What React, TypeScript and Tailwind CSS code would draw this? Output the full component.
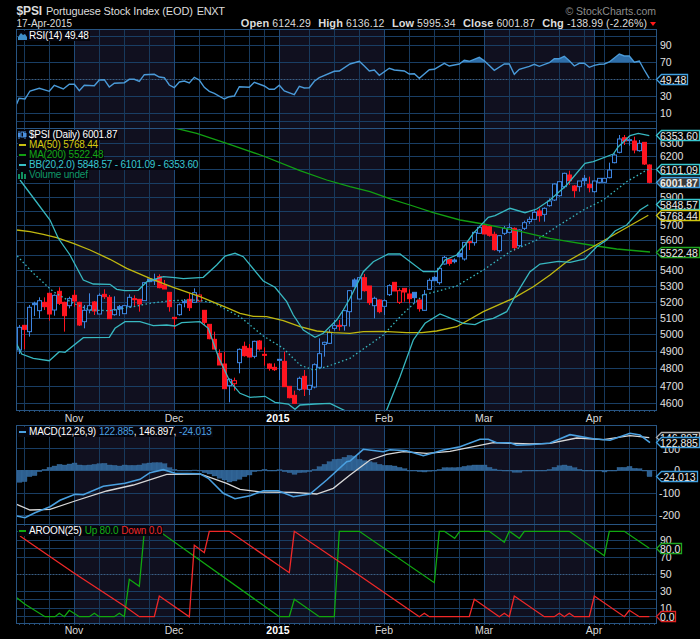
import React from 'react';

type Pt = [number, number];

// traced chart data: every series is in crop pixels (3x), offX/offY bring it back to page pixels
const toPage = (pts: Pt[], offX = 0, offY = 0) =>
  pts.map(([x, y]) => `${(offX + x / 3).toFixed(1)},${(offY + y / 3).toFixed(1)}`).join(' ');

const PLOT_L = 16.5;
const PLOT_R = 656.5;

const vLines = [24, 49, 99, 124, 149, 199, 224, 249, 264, 309, 334, 359, 409, 434, 459, 509, 534, 559, 584, 604, 629];
const monthLines = [74, 174, 279, 384, 484, 594];
const navyBands: [number, number][] = [[74, 174], [279, 384], [484, 594]];

const rsi: Pt[] = [[50,312],[57,295],[75,297],[90,273],[118,265],[148,274],[163,256],[190,267],[208,253],[223,253],[238,272],[253,256],[283,257],[298,240],[313,239],[328,261],[343,250],[373,248],[388,238],[403,238],[418,244],[433,224],[463,223],[478,231],[493,233],[508,255],[523,263],[538,246],[553,243],[568,249],[583,232],[598,240],[613,262],[628,274],[643,280],[673,297],[688,290],[703,288],[718,260],[748,262],[763,247],[793,258],[808,268],[823,268],[838,256],[853,273],[883,284],[898,259],[913,264],[928,263],[943,244],[958,233],[1003,214],[1018,213],[1050,192],
  [1078,184],[1093,198],[1108,213],[1123,210],[1138,226],[1168,205],[1183,210],[1213,213],[1228,222],[1243,221],[1258,235],[1288,209],[1303,208],[1333,190],[1348,198],[1378,192],[1393,181],[1408,184],[1438,172],[1453,182],[1483,211],[1513,192],[1528,192],[1543,223],[1558,208],[1588,199],[1603,193],[1618,199],[1648,188],[1663,176],[1678,176],[1693,169],[1708,182],[1723,198],[1738,190],[1753,190],[1768,202],[1783,196],[1798,193],[1813,192],[1828,186],[1858,162],[1873,168],[1888,168],[1903,187],[1918,183],[1933,210],[1948,235]];

const ma200: Pt[] = [[528,385],[590,400],[680,430],[790,468],[900,512],[980,540],[1050,560],[1110,575],[1175,598],[1230,615],[1300,638],[1380,660],[1450,672],[1550,692],[1650,715],[1690,722],[1770,735],[1850,747],[1950,756]];
const ma50: Pt[] = [[50,690],[90,695],[130,703],[170,713],[220,730],[270,750],[330,778],[380,805],[450,835],[520,862],[600,890],[680,923],[720,940],[760,949],[800,950],[850,962],[900,980],[950,993],[1000,998],[1050,1000],[1090,995],[1150,994],[1220,998],[1265,998],[1310,993],[1370,980],[1450,935],[1540,895],[1600,860],[1650,825],[1700,785],[1750,757],[1850,700],[1945,646]];
const bbUp: Pt[] = [[60,540],[105,600],[150,660],[175,715],[210,765],[250,840],[280,852],[330,853],[350,868],[375,872],[415,871],[440,845],[490,830],[525,833],[550,836],[610,832],[650,795],[675,768],[705,760],[730,770],[790,843],[825,862],[860,905],[880,945],[910,990],[945,1012],[970,1000],[1010,960],[1030,930],[1050,895],[1090,815],[1120,785],[1165,762],[1200,762],[1270,815],[1310,815],[1335,780],[1370,765],[1395,735],[1420,700],[1465,652],[1485,647],[1530,625],[1575,638],[1610,627],[1650,600],[1700,555],[1755,490],[1780,485],[1840,462],[1855,440],[1890,407],[1915,400],[1948,407]];
const bbLow: Pt[] = [[50,1032],[65,1062],[100,1075],[148,1082],[178,1055],[195,1057],[250,1013],[328,1012],[345,985],[375,965],[420,965],[460,977],[500,975],[525,978],[545,968],[600,965],[625,985],[655,1070],[690,1145],[720,1180],[750,1192],[795,1189],[825,1207],[865,1212],[885,1228],[900,1215],[945,1212],[990,1210],[1035,1232],[1060,1250],[1140,1250],[1160,1230],[1200,1130],[1240,1020],[1275,970],[1320,942],[1390,970],[1425,974],[1450,962],[1480,955],[1520,935],[1550,880],[1590,815],[1620,792],[1675,784],[1710,787],[1755,777],[1790,740],[1820,720],[1845,693],[1880,675],[1920,630],[1945,614]];
const bbMid: Pt[] = [[52,768],[100,820],[160,875],[220,910],[270,930],[330,932],[400,920],[450,910],[510,902],[590,900],[640,908],[680,930],[720,950],[790,1008],[850,1045],[900,1095],[940,1110],[980,1100],[1050,1075],[1150,1005],[1210,940],[1270,885],[1370,858],[1450,810],[1530,755],[1610,720],[1670,680],[1750,630],[1810,600],[1880,545],[1940,510],[1955,507]];

const macdLine: Pt[] = [[50,288],[75,293],[105,278],[150,260],[180,241],[225,223],[250,224],[310,199],[375,190],[420,178],[450,158],[490,149],[525,160],[600,161],[625,175],[670,220],[705,236],[750,227],[790,212],[835,212],[880,230],[930,222],[980,180],[1040,125],[1050,123],[1090,88],[1150,95],[1170,89],[1220,92],[1270,107],[1330,90],[1380,80],[1440,58],[1465,58],[1490,68],[1530,68],[1550,76],[1590,74],[1650,69],[1710,44],[1780,56],[1830,61],[1890,40],[1920,45],[1950,68]];
const signal: Pt[] = [[50,253],[90,270],[150,268],[225,243],[320,213],[400,195],[500,163],[600,162],[680,190],[720,208],[780,216],[880,217],[950,222],[1000,205],[1050,165],[1110,120],[1160,103],[1210,95],[1280,100],[1350,94],[1480,68],[1590,72],[1650,70],[1730,54],[1810,59],[1890,47],[1948,53]];
const histTops = [187,185,170,167,155,148,142,138,133,135,132,129,135,136,135,133,131,130,135,136,138,135,136,136,135,131,129,128,128,131,143,148,151,152,152,150,152,158,162,168,175,180,186,183,178,170,165,155,152,148,151,151,149,155,158,163,158,157,155,148,140,133,125,118,117,112,106,108,118,122,125,128,133,136,136,138,142,146,152,153,155,156,154,152,148,143,143,143,142,139,137,135,135,135,142,147,150,151,152,157,157,153,152,152,152,152,148,142,137,135,138,143,148,151,152,152,152,156,152,151,142,142,139,145,146,152,170];

const aroonUp: Pt[] = [[50,533],[75,553],[135,590],[165,590],[178,580],[193,590],[208,571],[238,590],[268,590],[283,580],[298,590],[343,590],[358,580],[373,590],[388,478],[418,499],[433,334],[478,334],[838,590],[868,590],[883,538],[958,590],[1003,590],[1018,334],[1078,334],[1303,488],[1318,334],[1333,334],[1364,355],[1379,334],[1468,334],[1513,367],[1528,334],[1558,355],[1573,334],[1708,334],[1813,407],[1828,334],[1873,334],[1948,385]];
const aroonDown: Pt[] = [[60,348],[223,460],[373,558],[418,590],[463,590],[478,528],[568,590],[583,376],[613,398],[628,334],[688,334],[868,458],[883,334],[1050,447],[1258,590],[1273,580],[1288,590],[1408,590],[1423,538],[1498,590],[1513,580],[1528,590],[1543,528],[1633,590],[1663,590],[1678,580],[1693,590],[1708,580],[1723,590],[1768,590],[1783,528],[1873,590],[1888,571],[1918,590],[1948,590]];

// [wick top, body top, body bottom, wick bottom, kind] b hollow blue, B solid blue, r solid red, h hollow red
type Candle = [number, number, number, number, string];
const candlesA: Candle[] = [[375,382,450,462,'b'],[375,376,388,448,'r'],[315,322,395,410,'b'],[305,310,314,348,'B'],[292,302,332,355,'b'],[292,307,320,330,'r'],[278,280,342,362,'r'],[283,286,330,347,'b'],[262,274,310,315,'r'],[305,307,347,395,'r'],[290,296,317,325,'b'],[270,286,303,320,'r'],[305,307,375,378,'r'],[315,331,365,385,'b'],[280,317,330,340,'b'],[303,306,333,345,'r'],[280,286,342,342,'b'],[268,283,290,297,'r'],[285,292,356,357,'r'],[289,329,344,347,'b'],[315,320,327,348,'B'],[315,317,341,342,'b'],[283,292,319,323,'b'],[286,296,298,318,'r'],[297,298,312,335,'r'],[246,248,302,302,'b'],[237,237,245,245,'B'],[221,238,243,255,'B'],[223,230,263,265,'r'],[240,255,267,267,'r'],[277,277,320,335,'r'],[352,352,356,387,'r'],[310,314,344,347,'b'],[297,305,307,322,'B'],[280,298,323,333,'r'],[265,278,307,308,'b'],[283,285,303,305,'h'],[330,331,367,375,'r'],[372,373,416,418,'r'],[395,418,447,448,'r'],[448,460,495,495,'r'],[455,492,566,566,'r'],[535,538,557,607,'b'],[533,542,551,572,'h'],[445,448,488,520,'b'],[425,439,467,470,'r'],[432,445,471,472,'r'],[422,424,469,475,'b'],[420,423,447,452,'r'],[442,463,465,497,'r'],[490,492,505,512,'r'],[490,502,509,513,'r'],[477,478,480,540,'b'],[455,484,560,560,'r'],[558,559,593,595,'r'],[572,586,610,610,'r'],[530,535,568,572,'b'],[510,529,567,588,'r'],[556,556,568,585,'b'],[490,494,561,565,'b'],[415,461,502,502,'b'],[425,427,433,470,'b'],[388,398,430,432,'b'],[360,377,385,392,'b'],[360,376,379,392,'r'],[330,332,377,392,'b'],[270,272,335,380,'b']];
const candlesB: Candle[] = [[235,240,260,262,'B'],[232,233,297,298,'b'],[222,233,272,275,'r'],[258,258,308,315,'r'],[290,295,317,355,'b'],[298,300,335,340,'r'],[298,302,319,345,'b'],[253,257,284,288,'b'],[247,247,273,272,'r'],[265,272,307,312,'h'],[265,265,276,305,'r'],[268,282,296,310,'r'],[277,277,293,310,'B'],[298,300,326,335,'r'],[270,284,331,332,'b'],[235,241,268,270,'b'],[228,232,242,243,'B'],[203,205,248,254,'b'],[168,172,192,194,'b'],[177,178,190,197,'r'],[175,180,185,190,'B'],[155,160,170,172,'B'],[126,127,177,182,'b'],[124,125,127,150,'r'],[95,97,128,137,'b'],[80,82,100,100,'b'],[75,77,102,102,'r'],[78,80,106,110,'r'],[95,103,149,152,'r'],[105,107,152,158,'b'],[78,85,100,105,'b'],[70,83,97,100,'b'],[82,85,143,152,'r'],[88,90,137,142,'b'],[62,68,85,90,'b'],[50,58,65,72,'b'],[30,37,58,60,'b'],[25,33,47,65,'r'],[22,25,43,65,'b']];
const candlesC: Candle[] = [[220,228,242,245,'b'],[175,177,225,228,'b'],[168,170,212,215,'b'],[143,145,185,190,'b'],[137,150,167,180,'r'],[180,183,197,218,'r'],[168,168,185,200,'b'],[150,160,167,182,'B'],[155,178,188,202,'r'],[168,168,200,203,'b'],[160,160,172,175,'b'],[160,160,172,173,'b'],[113,135,158,160,'b'],[85,90,113,115,'b'],[30,42,82,85,'b'],[30,38,48,60,'r'],[40,44,47,62,'b'],[35,48,75,85,'r'],[45,55,77,80,'b'],[52,52,117,120,'r'],[118,120,172,175,'r']];
const candles = [
  ...candlesA.map((c) => c.map((v) => (typeof v === 'number' ? 200 + v / 3 : v))),
  ...candlesB.map((c) => c.map((v) => (typeof v === 'number' ? 200 + v / 3 : v))),
  ...candlesC.map((c) => c.map((v) => (typeof v === 'number' ? 125 + v / 3 : v))),
] as Candle[];

const BLUE = '#3d85e0';
const RED = '#ff1520';

const Grid = ({ top, bottom, rows, dashed }: { top: number; bottom: number; rows: number[]; dashed?: number }) => (
  <g>
    {navyBands.map(([a, b]) => (
      <rect key={a} x={a} y={top} width={b - a} height={bottom - top} fill="#10101f" />
    ))}
    {rows.map((y) => (
      <line key={y} x1={PLOT_L} x2={PLOT_R} y1={y} y2={y} stroke="#193e64" />
    ))}
    {dashed !== undefined && (
      <line x1={PLOT_L} x2={PLOT_R} y1={dashed} y2={dashed} stroke="#3a5f85" strokeDasharray="2 1" />
    )}
    {vLines.map((x) => (
      <line key={x} x1={x + 0.5} x2={x + 0.5} y1={top} y2={bottom} stroke="#17395c" />
    ))}
    {monthLines.map((x) => (
      <line key={x} x1={x + 0.5} x2={x + 0.5} y1={top} y2={bottom} stroke="#1f4a78" />
    ))}
  </g>
);

const Frame = ({ top, bottom }: { top: number; bottom: number }) => (
  <rect x={PLOT_L} y={top} width={PLOT_R - PLOT_L} height={bottom - top} fill="none" stroke="#275482" />
);

const Tag = ({ y, text, color, fill = '#000', bold, w = 32 }: { y: number; text: string; color: string; fill?: string; bold?: boolean; w?: number }) => (
  <g>
    <polygon
      points={`656.5,${y} 661.5,${y - 5} ${656.5 + w},${y - 5} ${656.5 + w},${y + 5} 661.5,${y + 5}`}
      fill={fill}
      stroke={color}
      strokeWidth={1.3}
    />
    <text x={660} y={y + 4} className={`fill-[#ececec] text-[10.5px] ${bold ? 'font-bold' : ''}`}>
      {text}
    </text>
  </g>
);

const AxisLabel = ({ y, text, end }: { y: number; text: string; end?: boolean }) => (
  <text x={end ? 680 : 660} y={y + 4} textAnchor={end ? 'end' : 'start'} className="fill-[#e0e0e0] text-[10.5px]">
    {text}
  </text>
);

const Line = ({ pts, color, offX = 0, offY = 0, width = 1.3, dash }: { pts: Pt[]; color: string; offX?: number; offY?: number; width?: number; dash?: string }) => (
  <polyline points={toPage(pts, offX, offY)} fill="none" stroke={color} strokeWidth={width} strokeDasharray={dash} />
);

const MonthAxis = ({ top, baseline }: { top: number; baseline: number }) => (
  <svg width={700} height={baseline - top + 4} viewBox={`0 ${top} 700 ${baseline - top + 4}`} className="block">
    {Array.from({ length: 128 }, (_, i) => (
      <line key={i} x1={19.5 + 5 * i} x2={19.5 + 5 * i} y1={top} y2={top + 2} stroke="#274c74" />
    ))}
    {[['Nov', 74], ['Dec', 174], ['Feb', 384], ['Mar', 484], ['Apr', 594]].map(([m, x]) => (
      <text key={m} x={x} y={baseline} textAnchor="middle" className="fill-[#d8d8d8] text-[10.5px]">
        {m}
      </text>
    ))}
    <text x={278} y={baseline} textAnchor="middle" className="fill-white text-[10.5px] font-bold">
      2015
    </text>
  </svg>
);

const Row = ({ children, icon }: { children: React.ReactNode; icon: React.ReactNode }) => (
  <div className="flex h-[10px] w-fit items-center bg-[#04040c] pr-[1px] text-[10px] leading-[10px] tracking-[-0.2px] whitespace-nowrap">
    <span className="flex w-[11px] items-center">{icon}</span>
    {children}
  </div>
);

const Dash = ({ className }: { className: string }) => <span className={`ml-[1px] h-[2px] w-[7px] ${className}`} />;

export default function App() {
  return (
    <div className="relative h-[639px] w-[700px] overflow-hidden bg-black font-['Liberation_Sans',Arial,sans-serif] text-white">
      {/* header */}
      <div className="flex h-[29px] flex-col pr-[44px] pl-[16.5px]">
        <div className="flex h-[18px] items-end justify-between">
          <div className="flex items-baseline gap-[4px] text-[11px] leading-[14px] tracking-[-0.15px] text-[#dcdcdc]">
            <span className="text-[12px] font-bold">$PSI</span>
            <span>Portuguese Stock Index (EOD)</span>
            <span className="tracking-[-0.4px]">ENXT</span>
          </div>
          <span className="text-[10.5px] leading-[13px] text-[#8c8c8c]">© StockCharts.com</span>
        </div>
        <div className="flex h-[11px] items-end justify-between text-[10.5px] leading-[11px] text-[#dcdcdc]">
          <span className="text-[10px]">17-Apr-2015</span>
          <div className="flex items-baseline gap-[7.4px] tracking-[0.08px]">
            <span><b className="text-[11px]">Open</b> 6124.29</span>
            <span><b className="text-[11px]">High</b> 6136.12</span>
            <span><b className="text-[11px]">Low</b> 5995.34</span>
            <span><b className="text-[11px]">Close</b> 6001.87</span>
            <span className="flex items-center gap-[3px]">
              <span><b className="text-[11px]">Chg</b> -138.99 (-2.26%)</span>
              <span className="h-0 w-0 border-x-[3.5px] border-t-[4px] border-x-transparent border-t-[#ff1a1a]" />
            </span>
          </div>
        </div>
      </div>

      {/* RSI */}
      <div className="relative h-[99px]">
        <svg width={700} height={99} viewBox="0 29 700 99" className="block overflow-visible">
          <Grid top={29} bottom={128} rows={[36.5, 45.5, 62.5, 96.5, 113.5, 121.5]} dashed={79.5} />
          <clipPath id="rsiHot">
            <rect x={16} y={29} width={640} height={33.5} />
          </clipPath>
          <polygon points={`${toPage(rsi)} 650,70 16,70`} fill="#2f6ea8" clipPath="url(#rsiHot)" />
          <Line pts={rsi} color="#4a9ad8" width={1.4} />
          <Frame top={29.5} bottom={128.5} />
          <AxisLabel y={45} text="90" />
          <AxisLabel y={62} text="70" />
          <AxisLabel y={96} text="30" />
          <AxisLabel y={113} text="10" />
          <Tag y={79.5} text="49.48" color="#40a0e0" w={31} />
        </svg>
        <div className="absolute top-[2px] left-[18px]">
          <Row
            icon={
              <svg width={9} height={7} viewBox="0 0 9 7">
                <path d="M0 7 L0 4 L3 0 L5 2 L7 1 L9 4 L9 7 Z" fill="#3f8fc8" />
              </svg>
            }
          >
            RSI(14) 49.48
          </Row>
        </div>
      </div>

      {/* price */}
      <div className="relative h-[282px]">
        <svg width={700} height={282} viewBox="0 128 700 282" className="block overflow-visible">
          <Grid
            top={128}
            bottom={410}
            rows={[143.5, 156.5, 169.5, 183.5, 197.5, 211.5, 225.5, 240.5, 255.5, 270.5, 286.5, 302.5, 318.5, 334.5, 351.5, 368.5, 386.5, 403.5]}
          />
          <clipPath id="priceArea">
            <rect x={16} y={128} width={640} height={282} />
          </clipPath>
          <g clipPath="url(#priceArea)">
            {candles.map(([wt, bt, bb, wb, kind], i) => {
              const x = 19.5 + 5 * i;
              const color = kind === 'r' || kind === 'h' ? RED : BLUE;
              const solid = kind === 'r' || kind === 'B';
              return (
                <g key={i}>
                  <line x1={x} x2={x} y1={wt} y2={wb} stroke={color} />
                  <rect x={x - 2} y={bt} width={4} height={Math.max(bb - bt, 1)} fill={solid ? color : '#05050c'} stroke={color} />
                </g>
              );
            })}
            <Line pts={bbMid} color="#38b8c0" dash="1.5 2.5" />
            <Line pts={ma200} color="#12a012" />
            <Line pts={ma50} color="#c0b810" />
            <Line pts={bbUp} color="#38b8c0" />
            <Line pts={bbLow} color="#38b8c0" />
          </g>
          <Frame top={128.5} bottom={410.5} />
          {[[143, '6300'], [156, '6200'], [197, '5900'], [225, '5700'], [240, '5600'], [270, '5400'], [286, '5300'], [302, '5200'], [318, '5100'], [334, '5000'], [351, '4900'], [368, '4800'], [386, '4700'], [403, '4600']].map(([y, t]) => (
            <AxisLabel key={t} y={y as number} text={t as string} />
          ))}
          <Tag y={135.5} text="6353.60" color="#38c8d0" w={43} />
          <Tag y={169.5} text="6101.09" color="#38c8d0" w={43} />
          <Tag y={182.5} text="6001.87" color="#40a0e0" fill="#3a3a3a" bold w={43} />
          <Tag y={204.5} text="5848.57" color="#38c8d0" w={43} />
          <Tag y={215.5} text="5768.44" color="#d0c810" w={43} />
          <Tag y={252.5} text="5522.48" color="#20a820" w={43} />
        </svg>
        <div className="absolute top-[2px] left-[18px]">
          <Row
            icon={
              <svg width={9} height={8} viewBox="0 0 9 8">
                <path d="M1 0 V8 M7 0 V8" stroke="#4a90e0" />
                <rect x={0} y={2} width={2.5} height={4} fill="#4a90e0" />
                <rect x={3} y={1} width={2.5} height={5} fill="none" stroke="#4a90e0" />
                <rect x={6} y={2} width={2.5} height={4} fill="#4a90e0" />
              </svg>
            }
          >
            $PSI (Daily) 6001.87
          </Row>
          <Row icon={<Dash className="bg-[#c8c010]" />}>
            <span className="text-[#d4cc10]">MA(50) 5768.44</span>
          </Row>
          <Row icon={<Dash className="bg-[#12a012]" />}>
            <span className="text-[#14a814]">MA(200) 5522.48</span>
          </Row>
          <Row icon={<Dash className="bg-[#38c0c8]" />}>
            <span className="text-[#38c8d0]">BB(20,2.0) 5848.57 - 6101.09 - 6353.60</span>
          </Row>
          <Row
            icon={
              <svg width={9} height={8} viewBox="0 0 9 8">
                <path d="M0 8 V3 H2 V8 Z M3 8 V1 H5 V8 Z M6 8 V3 H8 V8 Z" fill="#109060" />
              </svg>
            }
          >
            <span className="text-[#109868]">Volume undef</span>
          </Row>
        </div>
      </div>

      <div className="h-[15px]">
        <MonthAxis top={410} baseline={421.5} />
      </div>

      {/* MACD */}
      <div className="relative h-[99px]">
        <svg width={700} height={99} viewBox="0 425 700 99" className="block overflow-visible">
          <Grid top={425} bottom={524} rows={[448.5, 470.5, 493.5, 515.5]} />
          {histTops.map((t, i) => {
            const top = 420 + Math.min(t, 151) / 3;
            const bot = 420 + Math.max(t, 151) / 3;
            return <rect key={i} x={17 + 5 * i} y={top} width={5} height={Math.max(bot - top, 0.7)} fill="#2d5f90" stroke="#3f77aa" strokeWidth={0.3} />;
          })}
          <Line pts={signal} color="#d8d8d8" offY={420} />
          <Line pts={macdLine} color="#4aa0e0" offY={420} width={1.6} />
          <Frame top={425.5} bottom={524.5} />
          <AxisLabel y={449} text="100" end />
          <AxisLabel y={470} text="0" end />
          <AxisLabel y={493} text="-100" end />
          <AxisLabel y={515} text="-200" end />
          <Tag y={437.5} text="146.897" color="#b0b0b0" w={43} />
          <Tag y={442.5} text="122.885" color="#40a0e0" w={43} />
          <Tag y={476.5} text="-24.013" color="#40a0e0" w={41} />
        </svg>
        <div className="absolute top-[2px] left-[18px]">
          <Row icon={<Dash className="bg-[#4aa0e0]" />}>
            MACD(12,26,9)
            <span className="ml-[3px] text-[#4aa0e0]">122.885</span>, 146.897,
            <span className="ml-[3px] text-[#4aa0e0]">-24.013</span>
          </Row>
        </div>
      </div>

      {/* Aroon */}
      <div className="relative h-[99px]">
        <svg width={700} height={99} viewBox="0 524 700 99" className="block overflow-visible">
          <Grid top={524} bottom={623} rows={[531.5, 540.5, 548.5, 557.5, 591.5, 599.5, 608.5, 616.5]} dashed={574.5} />
          <Line pts={aroonUp} color="#10a810" offY={420} />
          <Line pts={aroonDown} color="#f02828" offY={420} />
          <Frame top={524.5} bottom={623.5} />
          <AxisLabel y={540} text="90" />
          <AxisLabel y={557} text="70" />
          <AxisLabel y={574} text="50" />
          <AxisLabel y={591} text="30" />
          <AxisLabel y={608} text="10" />
          <Tag y={548.5} text="80.0" color="#20a820" w={25} />
          <Tag y={616.5} text="0.0" color="#e02020" w={19} />
        </svg>
        <div className="absolute top-[2px] left-[18px]">
          <Row icon={<Dash className="bg-[#10a810]" />}>
            AROON(25)
            <span className="ml-[3px] text-[#14b014]">Up 80.0</span>
            <span className="ml-[3px] text-[#f02828]">Down 0.0</span>
          </Row>
        </div>
      </div>

      <MonthAxis top={623} baseline={633.5} />
    </div>
  );
}
